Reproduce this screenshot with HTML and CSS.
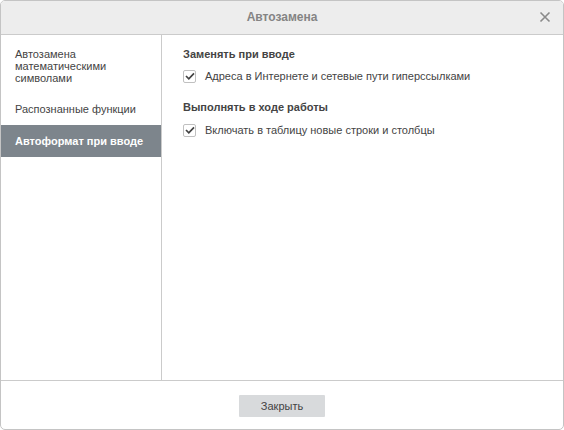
FILE: index.html
```html
<!DOCTYPE html>
<html lang="ru">
<head>
<meta charset="utf-8">
<title>Автозамена</title>
<link rel="stylesheet" href="styles.css">
</head>
<body>
<div class="window">
  <div class="header">
    <span class="title">Автозамена</span>
    <span class="close" aria-label="close">
      <svg width="12" height="12" viewBox="0 0 12 12"><path d="M1.5 1.5 L10.5 10.5 M10.5 1.5 L1.5 10.5" stroke="#8a8a8a" stroke-width="1.6" fill="none"/></svg>
    </span>
  </div>
  <div class="body">
    <ul class="menu">
      <li class="item first">Автозамена математическими символами</li>
      <li class="item">Распознанные функции</li>
      <li class="item active">Автоформат при вводе</li>
    </ul>
    <div class="content">
      <div class="heading">Заменять при вводе</div>
      <label class="check">
        <span class="box"><svg width="10" height="8" viewBox="0 0 10 8"><path d="M1 4 L3.8 6.8 L9 1.3" stroke="#444" stroke-width="1.7" fill="none"/></svg></span>
        <span>Адреса в Интернете и сетевые пути гиперссылками</span>
      </label>
      <div class="heading second">Выполнять в ходе работы</div>
      <label class="check">
        <span class="box"><svg width="10" height="8" viewBox="0 0 10 8"><path d="M1 4 L3.8 6.8 L9 1.3" stroke="#444" stroke-width="1.7" fill="none"/></svg></span>
        <span>Включать в таблицу новые строки и столбцы</span>
      </label>
    </div>
  </div>
  <div class="footer">
    <button class="btn">Закрыть</button>
  </div>
</div>
</body>
</html>
```

FILE: styles.css
```css
* { box-sizing: border-box; }
html, body {
  margin: 0;
  padding: 0;
  background: #ffffff;
}
body {
  font-family: "Liberation Sans", Arial, sans-serif;
  font-size: 11px;
  color: #444444;
}
.window {
  width: 564px;
  height: 430px;
  border: 1px solid #c4c4c4;
  border-radius: 5px;
  display: flex;
  flex-direction: column;
  overflow: hidden;
  background: #fff;
}
.header {
  height: 34px;
  flex: none;
  background: #ededed;
  border-bottom: 1px solid #cbcbcb;
  display: flex;
  align-items: center;
  justify-content: center;
  position: relative;
}
.title {
  font-size: 12px;
  font-weight: bold;
  color: #848484;
  line-height: 33px;
}
.close {
  position: absolute;
  right: 12px;
  top: 10px;
  width: 12px;
  height: 12px;
  display: block;
}
.close svg { display: block; }
.body {
  flex: 1;
  display: flex;
  min-height: 0;
}
.menu {
  list-style: none;
  margin: 0;
  padding: 0;
  width: 161px;
  flex: none;
  border-right: 1px solid #cbcbcb;
}
.item {
  padding: 8px 14px;
  line-height: 16px;
  color: #444;
}
.item.first {
  padding: 13px 30px 9px 14px;
  line-height: 12px;
}
.item.active {
  background: #7d858c;
  color: #ffffff;
  font-weight: bold;
}
.content {
  flex: 1;
  padding: 11px 21px 0;
  display: flex;
  flex-direction: column;
}
.heading {
  font-weight: bold;
  line-height: 16px;
  margin-bottom: 6px;
}
.heading.second {
  margin-top: 15px;
  margin-bottom: 7px;
}
.check {
  display: flex;
  align-items: center;
  line-height: 16px;
  gap: 9px;
}
.box {
  width: 13px;
  height: 13px;
  border: 1px solid #c0c0c0;
  border-radius: 2px;
  background: #fff;
  display: flex;
  align-items: center;
  justify-content: center;
  flex: none;
}
.box svg { display: block; }
.footer {
  height: 49px;
  flex: none;
  border-top: 1px solid #cbcbcb;
  display: flex;
  justify-content: center;
  align-items: flex-start;
  padding-top: 14px;
}
.btn {
  width: 86px;
  height: 22px;
  background: #d8dadc;
  border: none;
  border-radius: 1px;
  font-family: "Liberation Sans", Arial, sans-serif;
  font-size: 11px;
  color: #444;
  padding: 0;
}
```
